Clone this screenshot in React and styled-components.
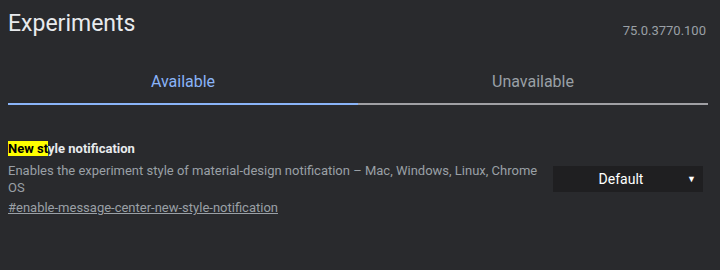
import React from "react";
import styled, { createGlobalStyle } from "styled-components";

const GlobalStyle = createGlobalStyle`
  html, body {
    margin: 0;
    padding: 0;
    background: #292a2d;
  }
  body {
    font-family: Roboto, "Liberation Sans", sans-serif;
    color: #e8eaed;
  }
`;

const Page = styled.div`
  width: 700px;
  padding: 0 12px 0 8px;
  height: 270px;
  background: #292a2d;
`;

const Header = styled.div`
  display: flex;
  justify-content: space-between;
  align-items: flex-start;
  height: 60px;
`;

const Title = styled.h1`
  margin: 10px 0 0;
  font-size: 23px;
  font-weight: 400;
  color: #e8eaed;
`;

const Version = styled.span`
  margin-top: 23px;
  margin-right: 2px;
  font-size: 13px;
  color: #9aa0a6;
`;

const Tabs = styled.div`
  display: flex;
`;

const Tab = styled.div`
  flex: 1;
  display: flex;
  align-items: center;
  justify-content: center;
  height: 45px;
  box-sizing: border-box;
  font-size: 16px;
  color: ${(p) => (p.active ? "#8ab4f8" : "#9aa0a6")};
  border-bottom: 2px solid ${(p) => (p.active ? "#8ab4f8" : "#a0a0a4")};
`;

const Experiment = styled.div`
  display: flex;
  justify-content: space-between;
  align-items: flex-start;
  margin-top: 36px;
`;

const Info = styled.div`
  width: 540px;
`;

const Name = styled.h2`
  margin: 0;
  font-size: 13px;
  font-weight: 700;
  color: #e8eaed;
  line-height: 16px;
`;

const Highlight = styled.mark`
  background: #ffff00;
  color: #000;
`;

const Description = styled.p`
  margin: 5px 0 0;
  font-size: 13px;
  line-height: 17px;
  color: #9aa0a6;
`;

const Permalink = styled.a`
  display: block;
  margin-top: 3px;
  font-size: 13px;
  line-height: 17px;
  color: #9aa0a6;
  text-decoration: underline;
`;

const Select = styled.div`
  position: relative;
  margin-top: 25px;
  margin-right: 5px;
  width: 150px;
  height: 26px;
  box-sizing: border-box;
  padding-right: 14px;
  background: #1f1f21;
  display: flex;
  align-items: center;
  justify-content: center;
  font-size: 14px;
  font-weight: 400;
  color: #ffffff;
`;

const Arrow = styled.span`
  position: absolute;
  right: 7px;
  top: 8px;
  font-size: 9px;
  color: #ffffff;
`;

export default function App() {
  return (
    <>
      <GlobalStyle />
      <Page>
        <Header>
          <Title>Experiments</Title>
          <Version>75.0.3770.100</Version>
        </Header>
        <Tabs>
          <Tab active>Available</Tab>
          <Tab>Unavailable</Tab>
        </Tabs>
        <Experiment>
          <Info>
            <Name>
              <Highlight>New st</Highlight>yle notification
            </Name>
            <Description>
              Enables the experiment style of material-design notification – Mac, Windows, Linux, Chrome OS
            </Description>
            <Permalink href="#enable-message-center-new-style-notification">
              #enable-message-center-new-style-notification
            </Permalink>
          </Info>
          <Select>
            Default
            <Arrow>▼</Arrow>
          </Select>
        </Experiment>
      </Page>
    </>
  );
}
